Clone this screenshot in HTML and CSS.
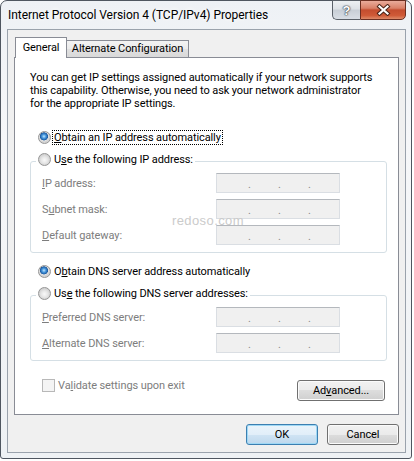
FILE: index.html
```html
<!DOCTYPE html>
<html lang="en">
<head>
    <meta charset="UTF-8">
    <title>Internet Protocol Version 4 (TCP/IPv4) Properties</title>
    <link rel="stylesheet" href="styles.css">
</head>
<body>
<div class="window">
    <div class="titlebar">
        <span class="title">Internet Protocol Version 4 (TCP/IPv4) Properties</span>
        <div class="caption-btns">
            <span class="cap-btn help">?</span>
            <span class="cap-btn close">
                <svg width="15" height="12" viewBox="0 0 15 12">
                    <path d="M3.5 2.5 L11.5 9.5 M11.5 2.5 L3.5 9.5" stroke="#4a2418" stroke-width="4.2" stroke-linecap="square" fill="none"/>
                    <path d="M3.5 2.5 L11.5 9.5 M11.5 2.5 L3.5 9.5" stroke="#fff" stroke-width="2.2" stroke-linecap="square" fill="none"/>
                </svg>
            </span>
        </div>
    </div>

    <div class="client">
        <div class="tabs">
            <span class="tab active">General</span>
            <span class="tab alt">Alternate Configuration</span>
        </div>
        <div class="panel">
            <p class="intro">You can get IP settings assigned automatically if your network supports<br>this capability. Otherwise, you need to ask your network administrator<br>for the appropriate IP settings.</p>

            <div class="opt">
                <span class="radio on"></span>
                <span class="focus"><u>O</u>btain an IP address automatically</span>
            </div>

            <div class="group">
                <div class="group-head">
                    <span class="radio"></span>
                    <span>U<u>s</u>e the following IP address:</span>
                </div>
                <div class="field">
                    <span class="label"><u>I</u>P address:</span>
                    <span class="ipbox"><i>.</i><i>.</i><i>.</i></span>
                </div>
                <div class="field">
                    <span class="label">S<u>u</u>bnet mask:</span>
                    <span class="ipbox"><i>.</i><i>.</i><i>.</i></span>
                </div>
                <div class="field">
                    <span class="label"><u>D</u>efault gateway:</span>
                    <span class="ipbox"><i>.</i><i>.</i><i>.</i></span>
                </div>
            </div>

            <div class="opt dns">
                <span class="radio on"></span>
                <span>O<u>b</u>tain DNS server address automatically</span>
            </div>

            <div class="group">
                <div class="group-head">
                    <span class="radio"></span>
                    <span>Us<u>e</u> the following DNS server addresses:</span>
                </div>
                <div class="field">
                    <span class="label"><u>P</u>referred DNS server:</span>
                    <span class="ipbox"><i>.</i><i>.</i><i>.</i></span>
                </div>
                <div class="field">
                    <span class="label"><u>A</u>lternate DNS server:</span>
                    <span class="ipbox"><i>.</i><i>.</i><i>.</i></span>
                </div>
            </div>

            <div class="bottom-row">
                <span class="check"></span>
                <span class="label">Va<u>l</u>idate settings upon exit</span>
                <span class="btn advanced">Ad<u>v</u>anced...</span>
            </div>
        </div>

        <div class="buttons">
            <span class="btn default">OK</span>
            <span class="btn">Cancel</span>
        </div>
    </div>

    <span class="watermark">redoso.com</span>
</div>
</body>
</html>
```

FILE: styles.css
```css
* {
    box-sizing: border-box;
}
body {
    margin: 0;
    background: #fff;
    font-family: "Segoe UI", Roboto, sans-serif;
    font-size: 11px;
    letter-spacing: -0.1px;
    color: #000;
}
u {
    text-underline-offset: 1px;
}
.window {
    position: relative;
    width: 412px;
    height: 459px;
    border: 1px solid #4f5660;
    border-radius: 7px 7px 3px 3px;
    padding: 0 5px 5px 6px;
    background: linear-gradient(#eef1f5, #f6f7f9 30%, #eef1f4);
    display: flex;
    flex-direction: column;
}
.titlebar {
    height: 28px;
    display: flex;
    align-items: flex-start;
}
.title {
    padding: 7px 0 0 1px;
    font-size: 12px;
    line-height: 15px;
    letter-spacing: -0.05px;
    text-shadow: 0 0 5px #fff, 0 0 8px #fff;
}
.caption-btns {
    display: flex;
    margin: -1px 0 0 auto;
}
.cap-btn {
    height: 20px;
    border: 1px solid #5a6068;
    display: flex;
    align-items: center;
    justify-content: center;
}
.help {
    width: 28px;
    border-right: none;
    border-radius: 0 0 0 5px;
    background: linear-gradient(#edf0f3, #dde1e6 45%, #c8ced6 50%, #d9dee5);
    color: #fff;
    font: bold 13px "Liberation Sans", sans-serif;
    text-shadow: 0 0 1px #3a4048, 0 0 1px #3a4048, 0 0 2px #3a4048;
}
.close {
    width: 46px;
    border-radius: 0 0 5px 0;
    border-color: #6b2f22;
    background: linear-gradient(#e9ab9b, #d98068 40%, #c44d2f 50%, #cf5a37 80%, #de8a68);
}
.client {
    flex: 1;
    border: 1px solid #9aa2ac;
    background: #f0f0f0;
    padding: 7px 6px 0 6px;
}
.tabs {
    display: flex;
    align-items: flex-end;
    height: 20px;
    margin-left: 1px;
}
.tab {
    height: 17px;
    border: 1px solid #898c95;
    border-bottom: none;
    text-align: center;
    line-height: 16px;
    background: linear-gradient(#f3f3f3, #ebebeb 50%, #e1e1e1 50%, #d9d9d9);
}
.tab.active {
    position: relative;
    z-index: 1;
    width: 52px;
    height: 21px;
    margin-bottom: -1px;
    line-height: 19px;
    background: #fff;
}
.tab.alt {
    width: 122px;
    border-left: none;
}
.panel {
    height: 358px;
    border: 1px solid #898c95;
    background: #fff;
    padding: 13px 11px 0 15px;
}
.intro {
    margin: 0;
    line-height: 13px;
    white-space: nowrap;
}
.opt {
    display: flex;
    align-items: center;
    gap: 3px;
    height: 15px;
    margin: 20px 0 0 8px;
}
.opt.dns {
    margin-top: 11px;
}
.focus {
    outline: 1px dotted #000;
    outline-offset: 0;
    padding: 0 1px;
    margin-left: -1px;
}
.radio {
    flex: none;
    width: 13px;
    height: 13px;
    border-radius: 50%;
    border: 1px solid #959595;
    background: radial-gradient(circle at 50% 55%, #f9f9f9 0, #e8e8e8 3px, #d2d2d2 5.5px);
}
.radio.on {
    background: radial-gradient(circle at 45% 40%, #c2e6ff 0, #4596dc 2px, #1e5aa0 3.8px, #e3e3e3 4.3px, #d4d4d4 5.5px);
}
.group {
    margin-top: 16px;
    border: 1px solid #d5dfe5;
    border-radius: 3px;
    padding: 0 0 7px 11px;
}
.group-head {
    display: flex;
    align-items: center;
    gap: 3px;
    width: max-content;
    height: 15px;
    margin: -10px 0 0 -6px;
    padding: 0 2px;
    background: #fff;
}
.field {
    display: flex;
    align-items: center;
    height: 20px;
    margin-top: 6px;
    color: #7d7d7d;
}
.field .label {
    width: 174px;
}
.ipbox {
    display: flex;
    gap: 27px;
    width: 124px;
    height: 20px;
    padding: 4px 0 0 31px;
    border: 1px solid #dadee3;
    border-top-color: #b4b8bd;
    background: #f0f0f0;
    color: #8a8a8a;
}
.ipbox i {
    font-style: normal;
    width: 3px;
}
.bottom-row {
    display: flex;
    align-items: flex-start;
    margin-top: 18px;
    padding: 0 2px 0 12px;
    color: #7d7d7d;
}
.bottom-row .label {
    line-height: 13px;
}
.check {
    width: 13px;
    height: 13px;
    margin-right: 3px;
    border: 1px solid #b8b8b8;
    background: #f4f4f4;
}
.btn {
    display: flex;
    align-items: center;
    justify-content: center;
    width: 72px;
    height: 21px;
    border: 1px solid #707070;
    border-radius: 3px;
    background: linear-gradient(#f2f2f2, #ebebeb 50%, #dddddd 50%, #cfcfcf);
    box-shadow: inset 0 0 0 1px #fbfbfb;
    color: #000;
}
.btn.advanced {
    width: 88px;
    margin: 1px 0 0 auto;
}
.btn.default {
    border-color: #3c7fb1;
    background: linear-gradient(#eaf4fb, #e1eef9 50%, #d0e4f4 50%, #bed8ed);
    box-shadow: inset 0 0 0 1px #9fd8f5;
}
.buttons {
    display: flex;
    justify-content: flex-end;
    gap: 9px;
    margin-top: 9px;
}
.watermark {
    position: absolute;
    left: 171px;
    top: 212px;
    font: 13px "Liberation Sans", sans-serif;
    letter-spacing: 0.4px;
    color: #cbcbcb;
}
```
